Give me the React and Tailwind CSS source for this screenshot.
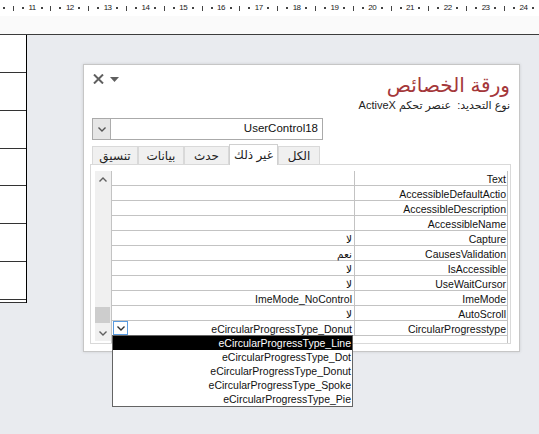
import React from "react";

const font = { fontFamily: '"Liberation Sans", "DejaVu Sans", sans-serif' };

const rows = [
  ["Text", ""],
  ["AccessibleDefaultActio", ""],
  ["AccessibleDescription", ""],
  ["AccessibleName", ""],
  ["Capture", "لا"],
  ["CausesValidation", "نعم"],
  ["IsAccessible", "لا"],
  ["UseWaitCursor", "لا"],
  ["ImeMode", "ImeMode_NoControl"],
  ["AutoScroll", "لا"],
  ["CircularProgresstype", "eCircularProgressType_Donut", true],
];

const options = [
  "eCircularProgressType_Line",
  "eCircularProgressType_Dot",
  "eCircularProgressType_Donut",
  "eCircularProgressType_Spoke",
  "eCircularProgressType_Pie",
];

const tabs = [
  { label: "تنسيق", w: "w-[46px]" },
  { label: "بيانات", w: "w-[46px]" },
  { label: "حدث", w: "w-[45px]" },
  { label: "غير ذلك", w: "w-[49px]", active: true },
  { label: "الكل", w: "w-[42px]" },
];

function Chevron({ up, className }) {
  return (
    <svg width="8" height="5" viewBox="0 0 8 5" className={className}>
      <path
        d={up ? "M0.5 4.5 L4 1 L7.5 4.5" : "M0.5 0.5 L4 4 L7.5 0.5"}
        fill="none"
        stroke="currentColor"
        strokeWidth="1.4"
      />
    </svg>
  );
}

function Dot() {
  return (
    <div className="w-[9.45px] flex justify-center">
      <span className="w-[2px] h-[2px] bg-[#444]" />
    </div>
  );
}

function Ruler() {
  const nums = [];
  for (let n = 11; n <= 24; n++) nums.push(n);
  return (
    <div className="h-[16px] bg-white overflow-hidden">
      <div className="flex ml-[-1px] h-full items-center text-[#222]">
        {nums.map((n) => (
          <div key={n} className="flex w-[37.8px] shrink-0 items-center">
            <Dot />
            <div className="w-[9.45px] flex justify-center">
              <span className="w-px h-[5px] bg-[#444]" />
            </div>
            <Dot />
            <div className="w-[9.45px] flex justify-center text-[8px] leading-none tracking-[-0.5px]">
              {n}
            </div>
          </div>
        ))}
        <Dot />
      </div>
    </div>
  );
}

function LeftColumn() {
  return (
    <div className="w-[27px] h-[268px] bg-white border-r border-black flex flex-col">
      {[0, 1, 2, 3, 4, 5, 6].map((i) => (
        <div key={i} className="h-[38px] border-b border-[#333]" />
      ))}
      <div className="h-[2px] border-b border-[#333] box-content" />
    </div>
  );
}

function PropertyGrid() {
  return (
    <div className="w-[397px] border-l border-r border-[#c3c3c3]">
      {rows.map(([name, value, isCombo]) => (
        <div key={name} className="flex h-[15px] border-b border-[#c3c3c3] text-[10.5px] leading-[12px] text-[#111]">
          <div className="relative w-[243px] border-r border-[#c3c3c3] flex items-start justify-end pt-[2px] pr-[2px]">
            {isCombo && (
              <>
                <div className="absolute left-[1px] top-0 w-[15px] h-[14px] border border-[#5a9be0] bg-white flex items-center justify-center text-[#333]">
                  <Chevron />
                </div>
                <div className="absolute left-0 top-full w-[241px] border border-[#646464] bg-white z-10">
                  {options.map((o, i) => (
                    <div
                      key={o}
                      className={
                        "h-[14px] pt-[1px] leading-[13px] text-right pr-[1px] " +
                        (i === 0 ? "bg-black text-white" : "text-[#111]")
                      }
                    >
                      {o}
                    </div>
                  ))}
                </div>
              </>
            )}
            <span className="whitespace-nowrap">{value}</span>
          </div>
          <div className="flex-1 flex items-start justify-end pt-[2px] pr-[1px] whitespace-nowrap overflow-hidden">
            {name}
          </div>
        </div>
      ))}
    </div>
  );
}

function Scrollbar() {
  return (
    <div className="w-[16px] h-[170px] bg-[#f0f0f0] flex flex-col text-[#606060]">
      <div className="h-[16px] flex items-center justify-center">
        <Chevron up />
      </div>
      <div className="h-[120px]" />
      <div className="h-[16px] bg-[#cdcdcd] w-[15px]" />
      <div className="h-[2px]" />
      <div className="h-[16px] flex items-center justify-center">
        <Chevron />
      </div>
    </div>
  );
}

function PropertySheet() {
  return (
    <div className="w-[437px] h-[288px] bg-white border border-[#c6c6c6] shadow-[0_0_3px_rgba(0,0,0,0.12)] flex flex-col pl-[6px] pr-[8px]">
      <div className="h-[53px] flex justify-between">
        <div className="flex items-center gap-[6px] h-[10px] mt-[9px] ml-[3px] text-[#5f5f5f]">
          <svg width="11" height="10" viewBox="0 0 11 10">
            <path d="M1 0.5 L10 9.5 M10 0.5 L1 9.5" stroke="currentColor" strokeWidth="2" />
          </svg>
          <svg width="9" height="5" viewBox="0 0 9 5">
            <path d="M0 0 L9 0 L4.5 5 Z" fill="currentColor" />
          </svg>
        </div>
        <div dir="rtl" className="flex flex-col items-start pr-[1px]">
          <div className="text-[20px] leading-[26px] mt-[7px] text-[#a4373a]">ورقة الخصائص</div>
          <div className="text-[11px] leading-[14px] text-[#222]">
            نوع التحديد:&nbsp; عنصر تحكم ActiveX
          </div>
        </div>
      </div>

      <div className="ml-[2px] w-[231px] h-[22px] border border-[#aaaaaa] flex items-center">
        <div className="w-[18px] h-[20px] bg-[#e6e6e6] border-r border-[#acacac] flex items-center justify-center text-[#555]">
          <Chevron />
        </div>
        <div className="flex-1 text-right pr-[4px] text-[11.5px] text-[#111]">UserControl18</div>
      </div>

      <div className="flex items-end ml-[2px] mt-[4px] h-[20px]">
        {tabs.map((t) => (
          <div
            key={t.label}
            className={
              t.w +
              " flex items-center justify-center text-[12px] text-[#222] border-t border-l border-r " +
              (t.active
                ? "h-[21px] bg-white border-[#d0d0d0] mb-[-1px] relative z-[1]"
                : "h-[18px] bg-[#f0f0f0] border-[#d9d9d9]")
            }
          >
            {t.label}
          </div>
        ))}
      </div>

      <div className="w-[421px] h-[180px] border border-[#d9d9d9] bg-white flex pl-[4px] pt-[6px]">
        <Scrollbar />
        <PropertyGrid />
      </div>
    </div>
  );
}

export default function App() {
  return (
    <div className="w-[539px] h-[434px] overflow-hidden bg-[#e9ebef] flex flex-col" style={font}>
      <Ruler />
      <div className="h-[19px] bg-[#fafafa] border-b border-[#3c3c3c]" />
      <div className="flex flex-1">
        <LeftColumn />
        <div className="pl-[56px] pt-[29px]">
          <PropertySheet />
        </div>
      </div>
    </div>
  );
}
